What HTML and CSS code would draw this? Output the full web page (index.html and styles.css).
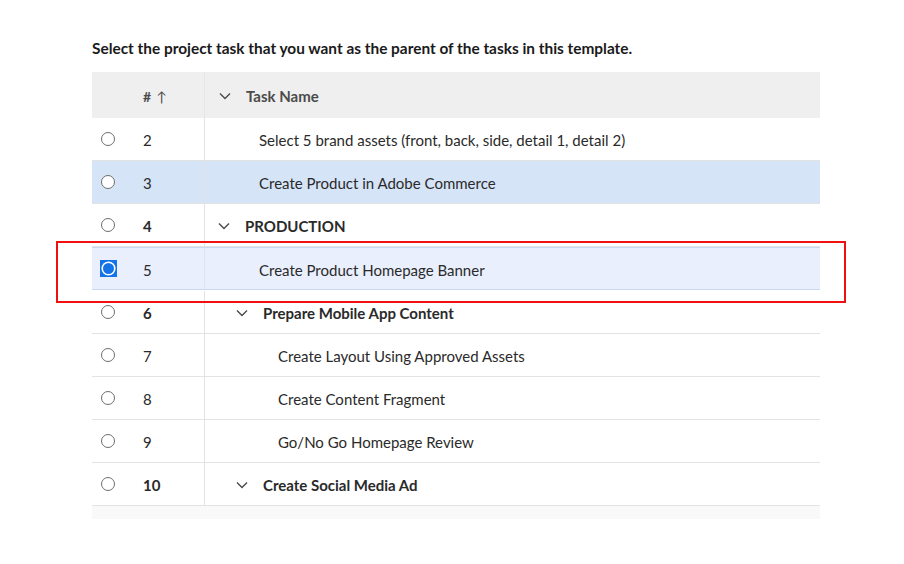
FILE: index.html
```html
<!DOCTYPE html>
<html>
<head>
<meta charset="utf-8">
<link rel="stylesheet" href="styles.css">
</head>
<body>
<div class="page">
  <h1 class="title">Select the project task that you want as the parent of the tasks in this template.</h1>
  <div class="table">
    <div class="row head">
      <div class="c-radio"></div>
      <div class="c-num"># <span class="arrow">↑</span></div>
      <div class="c-task">
        <svg class="chev" viewBox="0 0 12 8" width="12" height="8"><path d="M1 1.5 L6 6.5 L11 1.5" fill="none" stroke="#4b4b4b" stroke-width="1.4"/></svg>
        <span>Task Name</span>
      </div>
    </div>

    <div class="row">
      <div class="c-radio"><span class="radio"></span></div>
      <div class="c-num">2</div>
      <div class="c-task leaf l1">Select 5 brand assets (front, back, side, detail 1, detail 2)</div>
    </div>

    <div class="row sel">
      <div class="c-radio"><span class="radio"></span></div>
      <div class="c-num">3</div>
      <div class="c-task leaf l1">Create Product in Adobe Commerce</div>
    </div>

    <div class="row parent">
      <div class="c-radio"><span class="radio"></span></div>
      <div class="c-num">4</div>
      <div class="c-task p0">
        <svg class="chev" viewBox="0 0 12 8" width="12" height="8"><path d="M1 1.5 L6 6.5 L11 1.5" fill="none" stroke="#4b4b4b" stroke-width="1.4"/></svg>
        <span>PRODUCTION</span>
      </div>
    </div>

    <div class="focus-wrap">
      <div class="row active">
        <div class="c-radio">
          <svg class="radio-on" viewBox="0 0 17 17" width="17" height="17">
            <rect x="0" y="0" width="17" height="17" fill="#1473e6"/>
            <circle cx="8.5" cy="8.5" r="6.3" fill="#1473e6" stroke="#ffffff" stroke-width="1.6"/>
            <circle cx="8.5" cy="8.5" r="4" fill="#1473e6"/>
          </svg>
        </div>
        <div class="c-num">5</div>
        <div class="c-task leaf l1">Create Product Homepage Banner</div>
      </div>
    </div>

    <div class="row parent">
      <div class="c-radio"><span class="radio"></span></div>
      <div class="c-num">6</div>
      <div class="c-task p1">
        <svg class="chev" viewBox="0 0 12 8" width="12" height="8"><path d="M1 1.5 L6 6.5 L11 1.5" fill="none" stroke="#4b4b4b" stroke-width="1.4"/></svg>
        <span>Prepare Mobile App Content</span>
      </div>
    </div>

    <div class="row">
      <div class="c-radio"><span class="radio"></span></div>
      <div class="c-num">7</div>
      <div class="c-task leaf l2">Create Layout Using Approved Assets</div>
    </div>

    <div class="row">
      <div class="c-radio"><span class="radio"></span></div>
      <div class="c-num">8</div>
      <div class="c-task leaf l2">Create Content Fragment</div>
    </div>

    <div class="row">
      <div class="c-radio"><span class="radio"></span></div>
      <div class="c-num">9</div>
      <div class="c-task leaf l2">Go/No Go Homepage Review</div>
    </div>

    <div class="row parent">
      <div class="c-radio"><span class="radio"></span></div>
      <div class="c-num">10</div>
      <div class="c-task p1">
        <svg class="chev" viewBox="0 0 12 8" width="12" height="8"><path d="M1 1.5 L6 6.5 L11 1.5" fill="none" stroke="#4b4b4b" stroke-width="1.4"/></svg>
        <span>Create Social Media Ad</span>
      </div>
    </div>

    <div class="foot"></div>
  </div>
</div>
</body>
</html>
```

FILE: styles.css
```css
* { box-sizing: border-box; }
html, body { margin: 0; padding: 0; background: #ffffff; }
body {
  font-family: "Lato", "Open Sans", sans-serif;
  color: #2a2a2a;
}
.page {
  width: 904px;
  height: 564px;
  padding: 38px 0 0 92px;
}
.title {
  margin: 0 0 13px 0;
  font-size: 15.4px;
  font-weight: 700;
  line-height: 21px;
  color: #1a1a1a;
}
.table {
  width: 728px;
}
.row {
  display: flex;
  height: 43px;
  padding-top: 2px;
  border-bottom: 1px solid #e3e3e3;
  font-size: 15px;
  align-items: stretch;
}
.row.head {
  height: 46px;
  background: #efefef;
  border-bottom: none;
  font-weight: 700;
  font-size: 15px;
  color: #4b4b4b;
}
.c-radio {
  width: 32px;
  display: flex;
  align-items: center;
  justify-content: center;
}
.c-num {
  width: 80px;
  display: flex;
  align-items: center;
  padding-left: 19px;
}
.head .c-num { font-size: 14px; }
.arrow { margin-left: 5px; font-weight: 400; }
.c-task {
  flex: 1;
  display: flex;
  align-items: center;
  border-left: 1px solid #e3e3e3;
}
.row .c-task { margin-top: -2px; padding-top: 2px; }
.head .c-task { padding-left: 14px; border-left-color: #e6e6e6; }
.chev { margin-right: 15px; flex: none; }
.p0 { padding-left: 13px; }
.p1 { padding-left: 31px; }
.row .leaf.l1 { padding-left: 54px; }
.row .leaf.l2 { padding-left: 73px; }
.row .p0 { padding-left: 13px; }
.row .p1 { padding-left: 31px; }
.parent { font-weight: 700; }
.radio {
  width: 14px;
  height: 14px;
  border: 1px solid #6e6e6e;
  border-radius: 50%;
  background: #fff;
  margin-top: -2px;
}
.row.sel { background: #d6e4f8; }
.focus-wrap {
  margin: -6px -26px -12px -36px;
  padding: 4px 24px 11px 34px;
  border: 2px solid #f01010;
  position: relative;
  z-index: 1;
}
.row.active {
  background: #e9effc;
  border-top: 1px solid #cad9ef;
  border-bottom: 1px solid #cad9ef;
}
.active .c-task { border-left-color: #dbe5f5; }
.radio-on { display: block; margin-top: -2px; }
.foot {
  height: 13px;
  background: #f9f9f9;
}
```
